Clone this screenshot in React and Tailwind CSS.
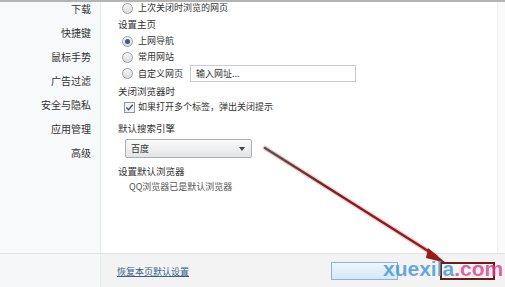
import React from 'react';

const font = { fontFamily: '"Noto Sans CJK SC", "Liberation Sans", sans-serif' };

function Radio({ checked }) {
  return (
    <span className="inline-flex h-[11px] w-[11px] shrink-0 items-center justify-center rounded-full border border-[#9aa0a8] bg-gradient-to-b from-[#f4f4f4] to-[#dcdcdc]">
      {checked && <span className="h-[5px] w-[5px] rounded-full bg-[#3c5a8a]" />}
    </span>
  );
}

function Checkbox() {
  return (
    <span className="inline-flex h-[11px] w-[11px] shrink-0 items-center justify-center border border-[#8f959c] bg-[#f4f4f4]">
      <svg viewBox="0 0 10 10" className="h-[9px] w-[9px]">
        <path d="M1.5 5 L4 7.5 L8.5 2" fill="none" stroke="#3b5278" strokeWidth="1.6" />
      </svg>
    </span>
  );
}

const menu = ['下载', '快捷键', '鼠标手势', '广告过滤', '安全与隐私', '应用管理', '高级'];

export default function App() {
  return (
    <div className="relative h-[287px] w-[505px] overflow-hidden bg-white text-[9px] text-[#333]" style={font}>
      <div className="h-[2px] bg-[#b4b4b4]" />
      <div className="flex h-[251px]">
        {/* Sidebar */}
        <div className="flex w-[101px] flex-col items-end border-r border-[#e6e8ea] bg-[#f8f9fb] pr-[9px] text-[10px]">
          {menu.map((m, i) => (
            <div key={m} className={i === 0 ? 'mt-[-1px] h-[24px] leading-[16px]' : 'h-[24px] leading-[16px]'}>
              {m}
            </div>
          ))}
        </div>

        {/* Main */}
        <div className="flex flex-1 flex-col pl-[17px] leading-[16px]">
          <div className="mt-[-2px] flex items-center gap-[5px] pl-[4px]">
            <Radio />
            <span>上次关闭时浏览的网页</span>
          </div>
          <div className="mt-[0px] text-[9.5px]">设置主页</div>
          <div className="mt-[1px] flex items-center gap-[5px] pl-[4px]">
            <Radio checked />
            <span>上网导航</span>
          </div>
          <div className="flex items-center gap-[5px] pl-[4px]">
            <Radio />
            <span>常用网站</span>
          </div>
          <div className="flex items-center pl-[4px]">
            <Radio />
            <span className="ml-[5px] w-[52px] whitespace-nowrap">自定义网页</span>
            <div className="flex h-[17px] w-[166px] items-center border border-[#c8ccd0] bg-white pl-[5px]">输入网址...</div>
          </div>
          <div className="mt-[1px] text-[9.5px]">关闭浏览器时</div>
          <div className="flex items-center gap-[3px] pl-[6px]">
            <Checkbox />
            <span>如果打开多个标签，弹出关闭提示</span>
          </div>
          <div className="mt-[5px] text-[9.5px]">默认搜索引擎</div>
          <div className="mt-[3px] ml-[7px] flex h-[19px] w-[127px] items-center justify-between rounded-[2px] border border-[#a9aeb4] bg-gradient-to-b from-[#fbfbfb] to-[#e3e4e6] pl-[5px] pr-[6px]">
            <span>百度</span>
            <span className="h-0 w-0 border-x-[3px] border-t-[4px] border-x-transparent border-t-[#444]" />
          </div>
          <div className="mt-[5px] text-[9.5px]">设置默认浏览器</div>
          <div className="pl-[11px] text-[#555]">QQ浏览器已是默认浏览器</div>
        </div>
        <div className="w-[8px] border-l border-[#f0f0f0] bg-[#fafafa]" />
      </div>

      {/* Footer */}
      <div className="flex h-[34px] items-center border-t border-[#e2e2e2] bg-[#f3f3f3]">
        <div className="h-full w-[101px] border-r border-[#e6e8ea] bg-[#f6f7f9]" />
        <span className="ml-[16px] mt-[2px] text-[#3d5e86] underline">恢复本页默认设置</span>
        <div className="ml-auto mr-[10px] flex items-center gap-[42px]">
          <div className="h-[18px] w-[67px] border border-[#8fb2d6] bg-gradient-to-b from-[#eef6fc] to-[#d6e8f6]" />
          <div className="h-[18px] w-[55px] border-2 border-[#6b1c1c] bg-[#f5f5f5]" />
        </div>
      </div>

      {/* Annotation arrow */}
      <svg className="pointer-events-none absolute left-0 top-0" width="505" height="287">
        <defs>
          <linearGradient id="g" x1="265" y1="148" x2="445" y2="262" gradientUnits="userSpaceOnUse">
            <stop offset="0" stopColor="#555" />
            <stop offset="0.35" stopColor="#7a2020" />
            <stop offset="1" stopColor="#a01818" />
          </linearGradient>
        </defs>
        <path d="M265 148 L436 256" stroke="#e07070" strokeWidth="5" strokeOpacity="0.35" strokeLinecap="round" />
        <path d="M265 148 L436 256" stroke="url(#g)" strokeWidth="2.5" strokeLinecap="round" />
        <path d="M428 248 L446 263 L426 258 Z" fill="#9a1a1a" />
      </svg>

      {/* Watermark */}
      <div className="pointer-events-none absolute left-[383px] top-[258px] flex items-baseline text-[21px] font-bold leading-none" style={{ fontFamily: '"Liberation Sans", sans-serif' }}>
        <span className="text-[#3f93d8]/80">xuexila</span>
        <span className="text-[#e0388a]/80">.com</span>
      </div>
    </div>
  );
}
